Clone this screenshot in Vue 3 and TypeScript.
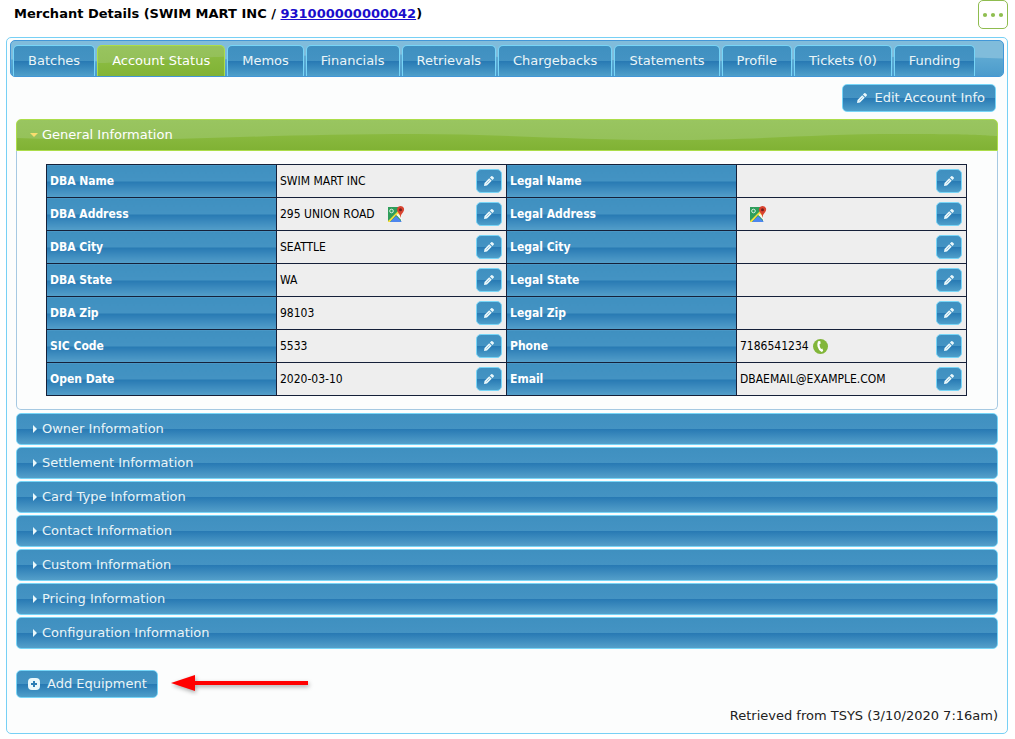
<script setup lang="ts">
import { ref } from 'vue'

interface Field {
  label: string
  value: string
  icon?: 'map' | 'phone'
}

const tabs: string[] = [
  'Batches',
  'Account Status',
  'Memos',
  'Financials',
  'Retrievals',
  'Chargebacks',
  'Statements',
  'Profile',
  'Tickets (0)',
  'Funding',
]
const activeTab = ref('Account Status')

const rows: [Field, Field][] = [
  [{ label: 'DBA Name', value: 'SWIM MART INC' }, { label: 'Legal Name', value: '' }],
  [
    { label: 'DBA Address', value: '295 UNION ROAD', icon: 'map' },
    { label: 'Legal Address', value: '', icon: 'map' },
  ],
  [{ label: 'DBA City', value: 'SEATTLE' }, { label: 'Legal City', value: '' }],
  [{ label: 'DBA State', value: 'WA' }, { label: 'Legal State', value: '' }],
  [{ label: 'DBA Zip', value: '98103' }, { label: 'Legal Zip', value: '' }],
  [{ label: 'SIC Code', value: '5533' }, { label: 'Phone', value: '7186541234', icon: 'phone' }],
  [{ label: 'Open Date', value: '2020-03-10' }, { label: 'Email', value: 'DBAEMAIL@EXAMPLE.COM' }],
]

const sections: string[] = [
  'Owner Information',
  'Settlement Information',
  'Card Type Information',
  'Contact Information',
  'Custom Information',
  'Pricing Information',
  'Configuration Information',
]
</script>

<template>
  <main class="page">
    <header class="top">
      <h1 class="title">
        Merchant Details (SWIM MART INC / <a href="#merchant">931000000000042</a>)
      </h1>
      <button type="button" class="more" aria-label="More actions">
        <svg viewBox="0 0 22 6" width="22" height="6" aria-hidden="true">
          <circle cx="3" cy="3" r="2.1" /><circle cx="11" cy="3" r="2.1" /><circle cx="19" cy="3" r="2.1" />
        </svg>
      </button>
    </header>

    <section class="panel">
      <div class="tabbar" role="tablist">
        <svg class="wave" viewBox="0 0 992 36" preserveAspectRatio="none" aria-hidden="true">
          <path d="M0 19C80 22 160 22 250 17S430 14 500 17S700 22 780 19S920 15 992 18V36H0Z" fill="url(#barFill)" />
          <defs>
            <linearGradient id="barFill" x1="0" y1="0" x2="0" y2="1">
              <stop offset="0" stop-color="#61abd3" /><stop offset="1" stop-color="#4b9bcc" />
            </linearGradient>
          </defs>
        </svg>
        <button
          v-for="tab in tabs"
          :key="tab"
          type="button"
          role="tab"
          class="tab"
          :class="{ active: tab === activeTab }"
          :aria-selected="tab === activeTab"
          @click="activeTab = tab"
        >{{ tab }}</button>
      </div>

      <div class="body">
        <div class="actions">
          <button type="button" class="btn">
            <svg class="pencil" viewBox="0 0 10 10" width="10" height="10" aria-hidden="true">
              <path d="M0 10L.5 7L5.2 2.300L7.700 4.800L3 9.500ZM5.900 1.600L7.200.3Q8-.2 8.800.5L9.600 1.300Q10.300 2 9.700 2.800L8.400 4.100Z" />
              <path class="cut" d="M2.400 7.600L5.600 4.400" />
            </svg>
            Edit Account Info
          </button>
        </div>

        <h3 class="section-title">
          <button type="button" class="section open" aria-expanded="true">
            <svg class="wave" viewBox="0 0 980 30" preserveAspectRatio="none" aria-hidden="true">
              <path d="M0 18C60 20 120 20 190 18S320 14 400 14S560 20 650 20S800 14 880 14S960 15 980 16V30H0Z" fill="url(#greenFill)" />
              <defs>
                <linearGradient id="greenFill" x1="0" y1="0" x2="0" y2="1">
                  <stop offset="0" stop-color="#8aba40" /><stop offset="1" stop-color="#80b234" />
                </linearGradient>
              </defs>
            </svg>
            <span class="caret down"></span><span class="caption">General Information</span>
          </button>
        </h3>
        <div class="content">
          <table class="fields">
            <tbody>
              <tr v-for="(row, i) in rows" :key="i">
                <template v-for="field in row" :key="field.label">
                  <th scope="row">{{ field.label }}</th>
                  <td>
                    <div class="cell">
                      <span v-if="field.value" class="value">{{ field.value }}</span>
                      <svg v-if="field.icon === 'map'" class="map" viewBox="0 0 17 16" width="17" height="16" role="img" aria-label="Map">
                        <path d="M0 1H13V14.500Q13 16 11.500 16H1.500Q0 16 0 14.500Z" fill="#2f9e5b" />
                        <path d="M0 15L10 5L13 8V12L8 9L2 16H0Z" fill="#f5dc3c" />
                        <path d="M2 16L8 10L13.500 15.500V16Z" fill="#4d86ee" />
                        <path d="M8.500 9L10 7.500L14 12V15Z" fill="#f4f4f4" />
                        <circle cx="3.500" cy="5" r="1.800" fill="none" stroke="#d9f0e0" stroke-width="1" />
                        <path d="M12.500 12Q12 8 9.800 6Q8.400 4 9.300 2.100Q10.400 0 12.500 0Q14.800 0 15.900 2.100Q16.600 4 15.200 6Q13 8 12.500 12Z" fill="#d9432f" />
                        <circle cx="12.500" cy="3.800" r="1.500" fill="#761f1c" />
                      </svg>
                      <svg v-if="field.icon === 'phone'" class="phone" viewBox="0 0 15 15" width="15" height="15" role="img" aria-label="Call">
                        <circle cx="7.500" cy="7.500" r="7.500" fill="#82b63a" />
                        <path d="M5 2.300L7.200 2L7.700 4.600L6.500 5.200Q6.500 8 8.100 9.900L9.400 9.600L10.200 12.100L8.600 13Q5.300 11 4.500 7.500Q4.100 4.500 5 2.300Z" fill="#fff" />
                      </svg>
                      <button type="button" class="btn edit" :aria-label="'Edit ' + field.label">
                        <svg class="pencil" viewBox="0 0 10 10" width="10" height="10" aria-hidden="true">
                          <path d="M0 10L.5 7L5.2 2.300L7.700 4.800L3 9.500ZM5.900 1.600L7.200.3Q8-.2 8.800.5L9.600 1.300Q10.300 2 9.700 2.800L8.400 4.100Z" />
                          <path class="cut" d="M2.400 7.600L5.600 4.400" />
                        </svg>
                      </button>
                    </div>
                  </td>
                </template>
              </tr>
            </tbody>
          </table>
        </div>

        <h3 v-for="name in sections" :key="name" class="section-title">
          <button type="button" class="section" aria-expanded="false">
            <span class="caret right"></span><span class="caption">{{ name }}</span>
          </button>
        </h3>

        <div class="equipment">
          <button type="button" class="btn add">
            <svg viewBox="0 0 12 12" width="12" height="12" aria-hidden="true">
              <rect width="12" height="12" rx="4" fill="#eaf8fb" />
              <path d="M6 3V9M3 6H9" stroke="#2c7db4" stroke-width="2" />
            </svg>
            Add Equipment
          </button>
          <svg class="arrow" viewBox="0 0 144 24" width="144" height="24" aria-hidden="true">
            <path d="M0 11L24 3V9H137V13H24V19Z" />
          </svg>
        </div>
        <p class="retrieved">Retrieved from TSYS (3/10/2020 7:16am)</p>
      </div>
    </section>
  </main>
</template>

<style>
body {
  margin: 0;
  background: #fff;
}
</style>

<style scoped>
.page {
  padding: 0 7px 5px 6px;
  font-family: Verdana, 'DejaVu Sans', sans-serif;
  font-size: 13px;
  line-height: 16px;
  color: #222;
}
button {
  font: inherit;
  cursor: pointer;
}
.top {
  display: flex;
  justify-content: space-between;
  align-items: flex-start;
  padding-left: 8px;
  height: 37px;
}
.title {
  margin: 0;
  padding-top: 6px;
  font-size: 13px;
  line-height: 16px;
  font-weight: bold;
  color: #000;
}
.title a {
  color: #1a0dcc;
}
.more {
  display: flex;
  align-items: center;
  justify-content: center;
  width: 30px;
  height: 29px;
  padding: 0;
  border: 1px solid #8fbc4f;
  border-radius: 5px;
  background: #fff;
}
.more svg {
  flex: none;
  fill: #8fbe50;
}
.panel {
  padding: 2px 3px 9px;
  border: 1px solid #77d0f5;
  border-radius: 5px;
  background: #fcfdfd;
}
.tabbar {
  position: relative;
  display: flex;
  gap: 2px;
  padding: 4px 2px 0;
  border: 1px solid #4297d7;
  border-radius: 5px;
  background: #80bcdb;
  overflow: hidden;
}
.wave {
  position: absolute;
  inset: 0;
  width: 100%;
  height: 100%;
}
.tab {
  position: relative;
  height: 31px;
  padding: 0 14px;
  border: 1px solid #77d5f7;
  border-bottom: 0;
  border-radius: 5px 5px 0 0;
  background: linear-gradient(#3f90c0, #4493c3 50%, #2779b3 50%, #4f9fca);
  color: #eaf5f7;
  white-space: nowrap;
}
.tab.active {
  border-color: #acdd4a;
  background: linear-gradient(177deg, #98c45f, #94c059 46%, #89ba3f 48%, #80b234);
  color: #fff;
}
.body {
  padding: 7px 6px 0;
}
.actions {
  display: flex;
  justify-content: flex-end;
  padding-right: 2px;
  margin-bottom: 7px;
}
.btn {
  display: flex;
  align-items: center;
  gap: 7px;
  height: 28px;
  padding: 0 10px 0 14px;
  border: 1px solid #77d5f7;
  border-radius: 5px;
  background: linear-gradient(#3f90c0, #4493c3 50%, #2779b3 50%, #4f9fca);
  color: #eaf5f7;
  white-space: nowrap;
}
.pencil {
  fill: #eaf8fb;
}
.cut {
  stroke: #5a9fc8;
  stroke-width: 0.6;
}
.section-title {
  margin: 0 0 2px;
  font-size: 13px;
  font-weight: normal;
}
.section {
  position: relative;
  display: flex;
  align-items: center;
  width: 100%;
  height: 32px;
  padding: 0 0 0 13px;
  border: 1px solid #77d5f7;
  border-radius: 5px;
  background: linear-gradient(#3f90c0, #4493c3 50%, #2779b3 50%, #549fca);
  color: #eaf5f7;
  text-align: left;
  overflow: hidden;
}
.section.open {
  border-color: #acdd4a;
  border-radius: 5px 5px 0 0;
  background: linear-gradient(#99c560, #93bf57);
  color: #fff;
}
.section-title:has(.open) {
  margin: 0;
}
.caption,
.caret {
  position: relative;
}
.caret {
  flex: none;
  width: 12px;
}
.caret::before {
  content: '';
  display: block;
}
.caret.right::before {
  width: 4px;
  height: 8px;
  margin-left: 3px;
  background: #eaf8fb;
  clip-path: polygon(0 0, 100% 50%, 0 100%);
}
.caret.down::before {
  width: 8px;
  height: 4px;
  background: #f9dd6e;
  clip-path: polygon(0 0, 100% 0, 50% 100%);
}
.content {
  margin-bottom: 3px;
  padding: 13px 30px 13px 29px;
  border: 1px solid #a6c9e2;
  border-top: 0;
  border-radius: 0 0 5px 5px;
}
.fields {
  width: 100%;
  table-layout: fixed;
  border-collapse: collapse;
  font-family: Tahoma, 'DejaVu Sans Condensed', 'DejaVu Sans', sans-serif;
  font-size: 12px;
  color: #000;
}
.fields th,
.fields td {
  height: 32px;
  padding: 0 4px 0 3px;
  border: 1px solid #152039;
}
.fields th {
  background: linear-gradient(#3f90c0, #4493c3 50%, #2779b3 50%, #549fca);
  color: #fff;
  text-align: left;
}
.fields td {
  background: #eee;
}
.cell {
  display: flex;
  align-items: center;
  height: 26px;
}
.edit {
  justify-content: center;
  width: 26px;
  height: 24px;
  margin-left: auto;
  padding: 0;
}
.map {
  margin-left: 13px;
}
.map:first-child {
  margin-left: 10px;
}
.phone {
  margin-left: 4px;
}
.equipment {
  display: flex;
  align-items: center;
  gap: 13px;
  margin-top: 21px;
}
.add {
  padding-left: 11px;
}
.arrow path {
  fill: #f00;
  filter: drop-shadow(1px 2px 2px #0005);
}
.retrieved {
  margin: 10px 0 0;
  text-align: right;
}
</style>
